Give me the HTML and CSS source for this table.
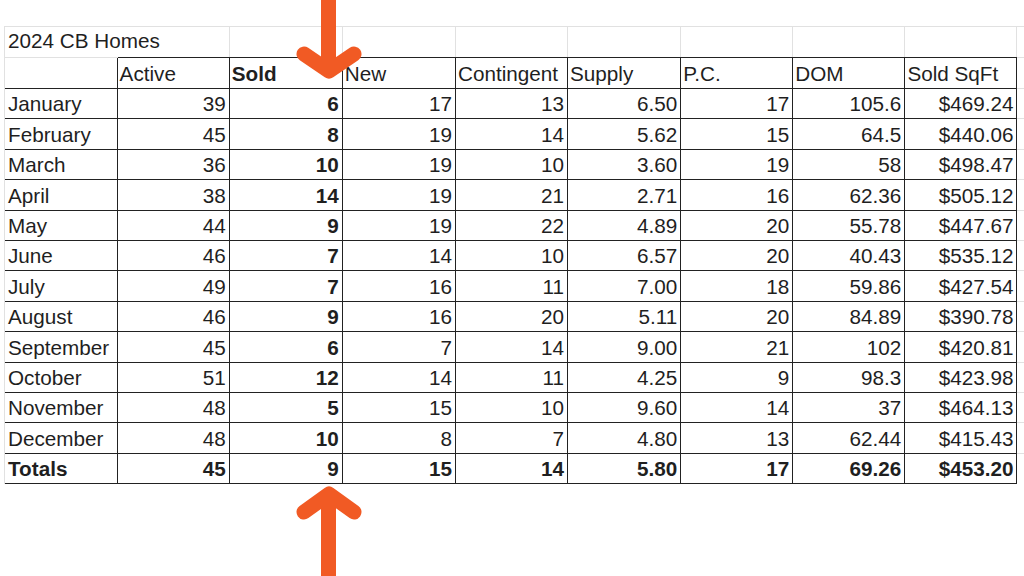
FILE: index.html
```html
<!DOCTYPE html>
<html>
<head>
<meta charset="utf-8">
<link rel="stylesheet" href="styles.css">
</head>
<body>
<div class="page">
  <div class="sheet-wrap">
  <table class="sheet">
    <colgroup>
      <col class="c112"><col class="c112"><col class="c113"><col class="c113"><col class="c112"><col class="c113"><col class="c112"><col class="c112"><col class="c112"><col class="cpad">
    </colgroup>
    <tr class="title">
      <td class="t1 m">2024 CB Homes</td><td></td><td></td><td></td><td></td><td></td><td></td><td></td><td></td><td class="pad"></td>
    </tr>
    <tr class="head">
      <td class="corner m"></td><th>Active</th><th class="b">Sold</th><th>New</th><th>Contingent</th><th>Supply</th><th>P.C.</th><th>DOM</th><th>Sold SqFt</th><td class="pad"></td>
    </tr>
    <tr><td class="m">January</td><td>39</td><td class="b">6</td><td>17</td><td>13</td><td>6.50</td><td>17</td><td>105.6</td><td>$469.24</td><td class="pad"></td></tr>
    <tr><td class="m">February</td><td>45</td><td class="b">8</td><td>19</td><td>14</td><td>5.62</td><td>15</td><td>64.5</td><td>$440.06</td><td class="pad"></td></tr>
    <tr><td class="m">March</td><td>36</td><td class="b">10</td><td>19</td><td>10</td><td>3.60</td><td>19</td><td>58</td><td>$498.47</td><td class="pad"></td></tr>
    <tr><td class="m">April</td><td>38</td><td class="b">14</td><td>19</td><td>21</td><td>2.71</td><td>16</td><td>62.36</td><td>$505.12</td><td class="pad"></td></tr>
    <tr><td class="m">May</td><td>44</td><td class="b">9</td><td>19</td><td>22</td><td>4.89</td><td>20</td><td>55.78</td><td>$447.67</td><td class="pad"></td></tr>
    <tr><td class="m">June</td><td>46</td><td class="b">7</td><td>14</td><td>10</td><td>6.57</td><td>20</td><td>40.43</td><td>$535.12</td><td class="pad"></td></tr>
    <tr><td class="m">July</td><td>49</td><td class="b">7</td><td>16</td><td>11</td><td>7.00</td><td>18</td><td>59.86</td><td>$427.54</td><td class="pad"></td></tr>
    <tr><td class="m">August</td><td>46</td><td class="b">9</td><td>16</td><td>20</td><td>5.11</td><td>20</td><td>84.89</td><td>$390.78</td><td class="pad"></td></tr>
    <tr><td class="m">September</td><td>45</td><td class="b">6</td><td>7</td><td>14</td><td>9.00</td><td>21</td><td>102</td><td>$420.81</td><td class="pad"></td></tr>
    <tr><td class="m">October</td><td>51</td><td class="b">12</td><td>14</td><td>11</td><td>4.25</td><td>9</td><td>98.3</td><td>$423.98</td><td class="pad"></td></tr>
    <tr><td class="m">November</td><td>48</td><td class="b">5</td><td>15</td><td>10</td><td>9.60</td><td>14</td><td>37</td><td>$464.13</td><td class="pad"></td></tr>
    <tr><td class="m">December</td><td>48</td><td class="b">10</td><td>8</td><td>7</td><td>4.80</td><td>13</td><td>62.44</td><td>$415.43</td><td class="pad"></td></tr>
    <tr class="totals"><td class="m">Totals</td><td>45</td><td>9</td><td>15</td><td>14</td><td>5.80</td><td>17</td><td>69.26</td><td>$453.20</td><td class="pad"></td></tr>
  </table>
  </div>

  <svg class="arrow arrow-down" width="80" height="90" viewBox="290 0 80 90">
    <path d="M328.5 0 V68 M304 54 L329 71 L354 54" fill="none" stroke="#f15a24" stroke-width="15" stroke-linecap="round" stroke-linejoin="round"/>
  </svg>
  <svg class="arrow arrow-up" width="80" height="100" viewBox="290 476 80 100">
    <path d="M328.5 576 V497 M304 512 L329 494 L354 512" fill="none" stroke="#f15a24" stroke-width="15" stroke-linecap="round" stroke-linejoin="round"/>
  </svg>
</div>
</body>
</html>
```

FILE: styles.css
```css
html, body {
  margin: 0;
  padding: 0;
  background: #ffffff;
}

.page {
  position: relative;
  width: 1024px;
  height: 576px;
  overflow: hidden;
  padding: 26px 0 0 4px;
  box-sizing: border-box;
}

.sheet-wrap {
  display: inline-block;
  vertical-align: top;
  border-left: 1px solid #e1e1e1;
}

.sheet {
  border-collapse: collapse;
  table-layout: fixed;
  width: 1020px;
  font-family: "Liberation Sans", Arial, sans-serif;
  font-size: 20.7px;
  line-height: 24px;
  color: #1f1f1f;
}

.c112 { width: 112px; }
.c113 { width: 113px; }
.cpad { width: 8px; }

.sheet td, .sheet th {
  height: 30.4px;
  padding: 0 3px 2px 2px;
  box-sizing: border-box;
  vertical-align: bottom;
  white-space: nowrap;
  overflow: visible;
  text-align: right;
  font-weight: normal;
  border: 1px solid #222222;
}

.sheet .title td {
  height: 31px;
  border: 1px solid #e1e1e1;
  border-bottom-color: #222222;
  text-align: left;
  padding-bottom: 4px;
}

.sheet .title td.t1 {
  border-bottom-color: #e1e1e1;
  border-right-style: hidden;
}

.sheet .head th {
  height: 31px;
  text-align: left;
  padding-bottom: 2px;
}

.sheet .head td.corner {
  border-top-color: #e1e1e1;
}

.sheet tr td.m {
  text-align: left;
  border-left-style: hidden;
  padding-left: 3px;
}

.sheet .b,
.sheet .totals td {
  font-weight: bold;
}

.sheet td.pad,
.sheet .title td.pad {
  border-left-color: #222222;
  border-top-color: #e1e1e1;
  border-bottom-color: #e1e1e1;
  border-right-style: hidden;
  padding: 0;
}

.sheet .title td.pad {
  border-left-color: #e1e1e1;
}

.sheet .totals td.pad {
  border-bottom-style: hidden;
}

.arrow {
  position: absolute;
  left: 290px;
}

.arrow-down { top: 0; }
.arrow-up { top: 476px; }
```
